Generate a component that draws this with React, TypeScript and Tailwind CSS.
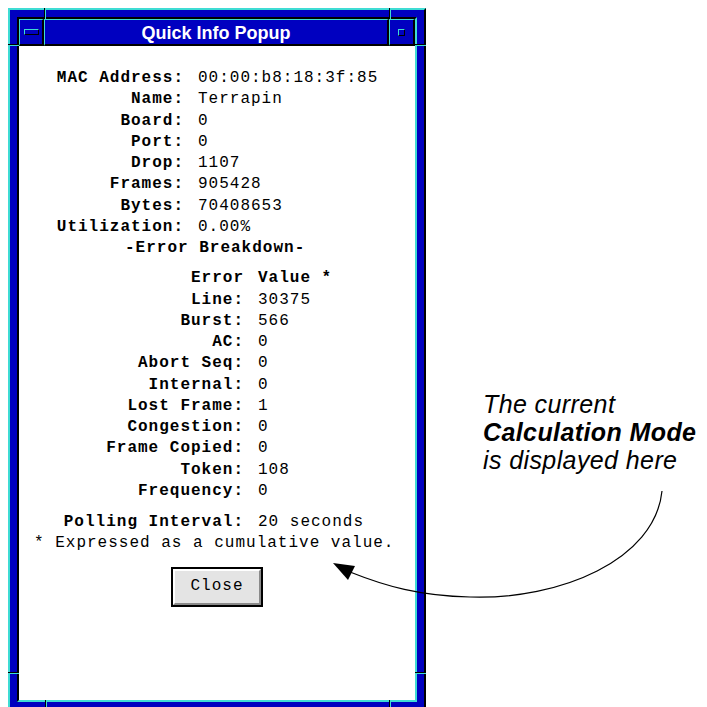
const CYAN = 'border-[#3fdcd4]';

const topRows: [string, string][] = [
  ['MAC Address:', '00:00:b8:18:3f:85'],
  ['Name:', 'Terrapin'],
  ['Board:', '0'],
  ['Port:', '0'],
  ['Drop:', '1107'],
  ['Frames:', '905428'],
  ['Bytes:', '70408653'],
  ['Utilization:', '0.00%'],
];

const errorRows: [string, string][] = [
  ['Line:', '30375'],
  ['Burst:', '566'],
  ['AC:', '0'],
  ['Abort Seq:', '0'],
  ['Internal:', '0'],
  ['Lost Frame:', '1'],
  ['Congestion:', '0'],
  ['Frame Copied:', '0'],
  ['Token:', '108'],
  ['Frequency:', '0'],
];

// little black/cyan notches cut through the window frame (resize corners)
function Notch({ className }: { className: string }) {
  return <div className={`absolute ${className}`} />;
}

function TitleBar() {
  return (
    <div className="flex h-[27px] shrink-0">
      {/* window menu button */}
      <div className="w-[25px] flex items-center justify-center border-t border-l border-[#3fdcd4] border-b-2 border-r-2 border-b-black border-r-black bg-[#0000c0]">
        <div className={`w-[15px] h-[6px] border-t border-l ${CYAN} border-b border-r border-b-black border-r-black bg-[#0000c0]`} />
      </div>
      {/* title */}
      <div className="w-[345px] flex items-center justify-center border-t border-l border-[#3fdcd4] border-b-2 border-r-2 border-b-black border-r-black bg-[#0000c0]">
        <span className="text-white font-bold text-[18px] leading-none font-['Liberation_Sans',Arial,sans-serif] pt-[1px]">
          Quick Info Popup
        </span>
      </div>
      {/* maximize button */}
      <div className="flex-1 flex items-center justify-center border-t border-l border-[#3fdcd4] border-b-2 border-r-2 border-b-black border-r-black bg-[#0000c0]">
        <div className={`w-[7px] h-[7px] border-t border-l ${CYAN} border-b border-r border-b-black border-r-black bg-[#0000c0]`} />
      </div>
    </div>
  );
}

function InfoWindow() {
  return (
    <div className="relative mt-[8px] ml-[8px] w-[418px] h-[703px] shrink-0 border-t-2 border-l-2 border-[#3fdcd4] border-r-2 border-b-2 border-r-black border-b-black bg-[#0000c0] p-[7px]">
      <div className="h-full flex flex-col border-t-2 border-l-2 border-black border-r-2 border-b-2 border-r-[#3fdcd4] border-b-[#3fdcd4]">
        <TitleBar />

        <div className="flex-1 bg-white pt-[22px] text-black text-[16px] tracking-[1px] leading-[21.25px] font-['Liberation_Mono','DejaVu_Sans_Mono',monospace]">
          <div className="grid grid-cols-[165px_1fr] gap-x-[14px]">
            {topRows.map(([label, value]) => (
              <div key={label} className="contents">
                <span className="text-right font-bold whitespace-pre">{label}</span>
                <span className="whitespace-pre">{value}</span>
              </div>
            ))}
          </div>

          <div className="pl-[106px] font-bold">-Error Breakdown-</div>

          <div className="mt-[9px] grid grid-cols-[225px_1fr] gap-x-[14px]">
            <span className="text-right font-bold">Error</span>
            <span className="font-bold">Value *</span>
            {errorRows.map(([label, value]) => (
              <div key={label} className="contents">
                <span className="text-right font-bold whitespace-pre">{label}</span>
                <span className="whitespace-pre">{value}</span>
              </div>
            ))}
          </div>

          <div className="mt-[10px] grid grid-cols-[225px_1fr] gap-x-[14px]">
            <span className="text-right font-bold">Polling Interval:</span>
            <span>20 seconds</span>
          </div>
          <div className="pl-[15px] whitespace-pre">* Expressed as a cumulative value.</div>

          <div className="mt-[12px] flex justify-center">
            <button className="w-[92px] h-[40px] border-2 border-black bg-black">
              <div className="h-full flex items-center justify-center border-2 border-t-white border-l-white border-b-[#8a8a8a] border-r-[#8a8a8a] bg-[#e4e4e4] text-[16px] tracking-[1px]">
                Close
              </div>
            </button>
          </div>
        </div>
      </div>

      {/* frame notches */}
      <Notch className="top-[-2px] left-[34px] w-[1px] h-[11px] bg-black" />
      <Notch className="top-[-2px] left-[35px] w-[1px] h-[11px] bg-[#3fdcd4]" />
      <Notch className="top-[-2px] left-[379px] w-[1px] h-[11px] bg-black" />
      <Notch className="top-[-2px] left-[380px] w-[1px] h-[11px] bg-[#3fdcd4]" />
      <Notch className="top-[34px] left-[-2px] w-[11px] h-[1px] bg-black" />
      <Notch className="top-[35px] left-[-2px] w-[11px] h-[1px] bg-[#3fdcd4]" />
      <Notch className="top-[34px] right-[-2px] w-[11px] h-[1px] bg-black" />
      <Notch className="top-[35px] right-[-2px] w-[11px] h-[1px] bg-[#3fdcd4]" />
      <Notch className="top-[662px] left-[-2px] w-[11px] h-[1px] bg-black" />
      <Notch className="top-[663px] left-[-2px] w-[11px] h-[1px] bg-[#3fdcd4]" />
      <Notch className="top-[662px] right-[-2px] w-[11px] h-[1px] bg-black" />
      <Notch className="top-[663px] right-[-2px] w-[11px] h-[1px] bg-[#3fdcd4]" />
      <Notch className="bottom-[-2px] left-[35px] w-[1px] h-[11px] bg-black" />
      <Notch className="bottom-[-2px] left-[36px] w-[1px] h-[11px] bg-[#3fdcd4]" />
      <Notch className="bottom-[-2px] left-[379px] w-[1px] h-[11px] bg-black" />
      <Notch className="bottom-[-2px] left-[380px] w-[1px] h-[11px] bg-[#3fdcd4]" />
    </div>
  );
}

export default function App() {
  return (
    <div className="relative w-[707px] h-[707px] overflow-hidden bg-white flex items-start">
      <InfoWindow />

      {/* callout */}
      <div className="ml-[57px] mt-[390px] flex flex-col text-black italic text-[25px] tracking-[0.4px] leading-[28px] font-['Liberation_Sans',Arial,sans-serif] whitespace-nowrap">
        <span>The current</span>
        <span className="font-bold">Calculation Mode</span>
        <span>is displayed here</span>
      </div>

      <svg className="absolute inset-0 pointer-events-none" width="707" height="707" viewBox="0 0 707 707">
        <path
          d="M 662 491 C 655 560, 560 600, 470 597 C 420 596, 385 586, 350 572"
          fill="none"
          stroke="black"
          strokeWidth="1.2"
        />
        <polygon points="333,563 355,566 348,580" fill="black" />
      </svg>
    </div>
  );
}
